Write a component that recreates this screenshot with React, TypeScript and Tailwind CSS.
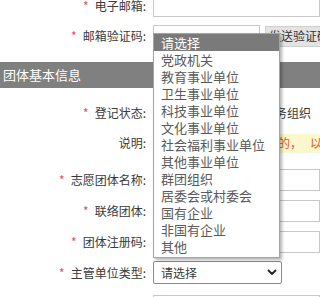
import React from 'react';

const options = [
  '请选择', '党政机关', '教育事业单位', '卫生事业单位', '科技事业单位', '文化事业单位',
  '社会福利事业单位', '其他事业单位', '群团组织', '居委会或村委会', '国有企业', '非国有企业', '其他',
];

const Label: React.FC<{ text: string; required?: boolean }> = ({ text, required }) => (
  <div className="text-right whitespace-nowrap leading-none">
    {required && <span className="text-[#e0505a] mr-[6px]">*</span>}
    {text}:
  </div>
);

const Input: React.FC<{ className?: string }> = ({ className = 'w-full' }) => (
  <div className={`h-[22px] border border-[#c8c8c8] bg-white ${className}`} />
);

export default function App() {
  return (
    <div className="relative w-[320px] h-[297px] overflow-hidden bg-white font-['Noto_Sans_CJK_SC',sans-serif] text-[12px] text-[#3a3a3a]">
      <div className="-mt-[9px]">
        {/* contact */}
        <div className="grid grid-cols-[146px_1fr] gap-x-[7px] items-center h-[30px]">
          <Label text="电子邮箱" required />
          <Input />
        </div>
        <div className="grid grid-cols-[146px_1fr] gap-x-[7px] items-center h-[30px]">
          <Label text="邮箱验证码" required />
          <div className="flex items-center gap-[5px]">
            <Input className="w-[107px]" />
            <div className="h-[21px] px-[3px] flex items-center whitespace-nowrap bg-[#e3e3e3] border border-[#cfcfcf] text-[#333]">
              发送验证码
            </div>
          </div>
        </div>

        {/* section */}
        <div className="mt-[11px] h-[26px] bg-[#808080] text-white text-[13px] pl-[3px] flex items-center">
          团体基本信息
        </div>

        <div className="mt-[10px] grid grid-cols-[146px_1fr] gap-x-[7px] items-center h-[30px]">
          <Label text="登记状态" required />
          <div className="pl-[2px] whitespace-nowrap overflow-hidden">已在民政部门登记的服务组织</div>
        </div>
        <div className="grid grid-cols-[146px_1fr] gap-x-[7px] items-center h-[30px]">
          <Label text="说明" />
          <div className="h-[19px] bg-[#fcf7cc] pl-[5px] flex items-center whitespace-nowrap overflow-hidden text-[#e4572e]">
            按照有关法律法规规定的，<span className="ml-[8px]">以实际情况填写</span>
          </div>
        </div>

        <div className="mt-[6px] grid grid-cols-[146px_1fr] gap-x-[7px] items-center h-[31px]">
          <Label text="志愿团体名称" required />
          <Input />
        </div>
        <div className="grid grid-cols-[146px_1fr] gap-x-[7px] items-center h-[31px]">
          <Label text="联络团体" required />
          <Input />
        </div>
        <div className="grid grid-cols-[146px_1fr] gap-x-[7px] items-center h-[31px]">
          <Label text="团体注册码" required />
          <Input />
        </div>
        <div className="grid grid-cols-[146px_1fr] gap-x-[7px] items-center h-[31px]">
          <Label text="主管单位类型" required />
          <div className="w-[129px] h-[23px] border border-[#8a8a8a] rounded-[2px] bg-white flex items-center justify-between pl-[7px] pr-[4px]">
            <span>请选择</span>
            <svg width="10" height="7" viewBox="0 0 10 7" className="text-[#222]">
              <path d="M1.5 1.5 L5 5 L8.5 1.5" fill="none" stroke="currentColor" strokeWidth="1.8" strokeLinecap="round" strokeLinejoin="round" />
            </svg>
          </div>
        </div>
        <div className="grid grid-cols-[146px_1fr] gap-x-[7px] items-start pt-[7px] h-[31px]">
          <div className="pt-[6px]">
            <Label text="所在地区" required />
          </div>
          <Input />
        </div>
      </div>

      {/* open select list */}
      <div className="absolute left-[153px] top-[33px] w-[127px] border border-[#a5a5a5] bg-white pb-[2px] shadow-[2px_2px_3px_rgba(0,0,0,0.3)]">
        {options.map((o, i) => (
          <div
            key={o}
            className={`h-[17px] leading-[17px] pl-[7px] text-[13px] whitespace-nowrap ${i === 0 ? 'bg-[#7a7a7a] text-white' : 'text-[#5a5a5a]'}`}
          >
            {o}
          </div>
        ))}
      </div>
    </div>
  );
}
